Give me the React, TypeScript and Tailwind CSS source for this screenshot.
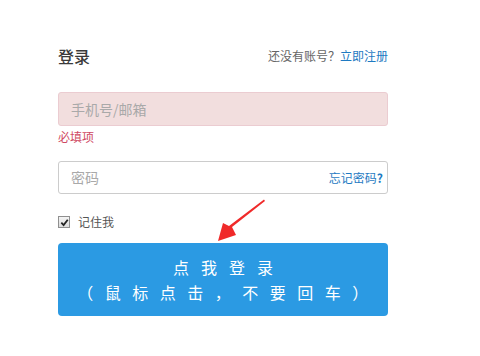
import React from "react";

const font = { fontFamily: '"Noto Sans CJK SC", "Noto Sans", sans-serif' };

export default function App() {
  return (
    <div
      className="relative w-[480px] h-[356px] bg-white pl-[58px] pr-[92px] pt-[46px]"
      style={font}
    >
      {/* header */}
      <div className="flex h-5 items-center justify-between">
        <h2 className="text-[16px] leading-5 font-medium text-[#3a3a3a]">登录</h2>
        <p className="text-[12px] leading-5 text-[#666]">
          还没有账号？<a className="text-[#1e7ac2]">立即注册</a>
        </p>
      </div>

      {/* account */}
      <div className="mt-[26px] flex h-[34px] items-center rounded-[3px] border border-[#ebccd1] bg-[#f2dede] px-3">
        <span className="text-[14px] text-[#a9a9a9]">手机号/邮箱</span>
      </div>
      <p className="mt-[3px] text-[12px] leading-4 text-[#cf4a63]">必填项</p>

      {/* password */}
      <div className="mt-4 flex h-[33px] items-center justify-between rounded-[3px] border border-[#ccc] pl-3 pr-1">
        <span className="text-[14px] text-[#a9a9a9]">密码</span>
        <a className="text-[12px] text-[#1e7ac2]">
          忘记密码<span className="font-bold">?</span>
        </a>
      </div>

      {/* remember */}
      <div className="mt-5 flex h-4 items-center gap-[8px]">
        <span className="flex h-[12px] w-[12px] items-center justify-center border border-[#8f8f8f] bg-gradient-to-b from-[#f4f4f4] to-[#dcdcdc]">
          <svg viewBox="0 0 10 10" className="h-[9px] w-[9px]">
            <path d="M1.5 5.2 L4 7.8 L8.6 2" fill="none" stroke="#222" strokeWidth="2" />
          </svg>
        </span>
        <span className="text-[12px] leading-4 text-[#555]">记住我</span>
      </div>

      {/* submit */}
      <button className="mt-[13px] flex h-[73px] w-full flex-col items-center justify-center rounded-[4px] bg-[#2b9ae3] text-[16px] leading-[25px] text-white">
        <span className="tracking-[12px] pl-[12px]">点我登录</span>
        <span className="tracking-[11.5px] pl-[11px]">（鼠标点击，不要回车）</span>
      </button>

      {/* red arrow annotation */}
      <svg
        className="absolute left-[210px] top-[195px] h-[50px] w-[60px]"
        viewBox="210 195 60 50"
      >
        <polygon
          points="264,199.5 265,201 232,227 236,235 218,241 223,223 229,226"
          fill="#f02a2a"
        />
      </svg>
    </div>
  );
}
